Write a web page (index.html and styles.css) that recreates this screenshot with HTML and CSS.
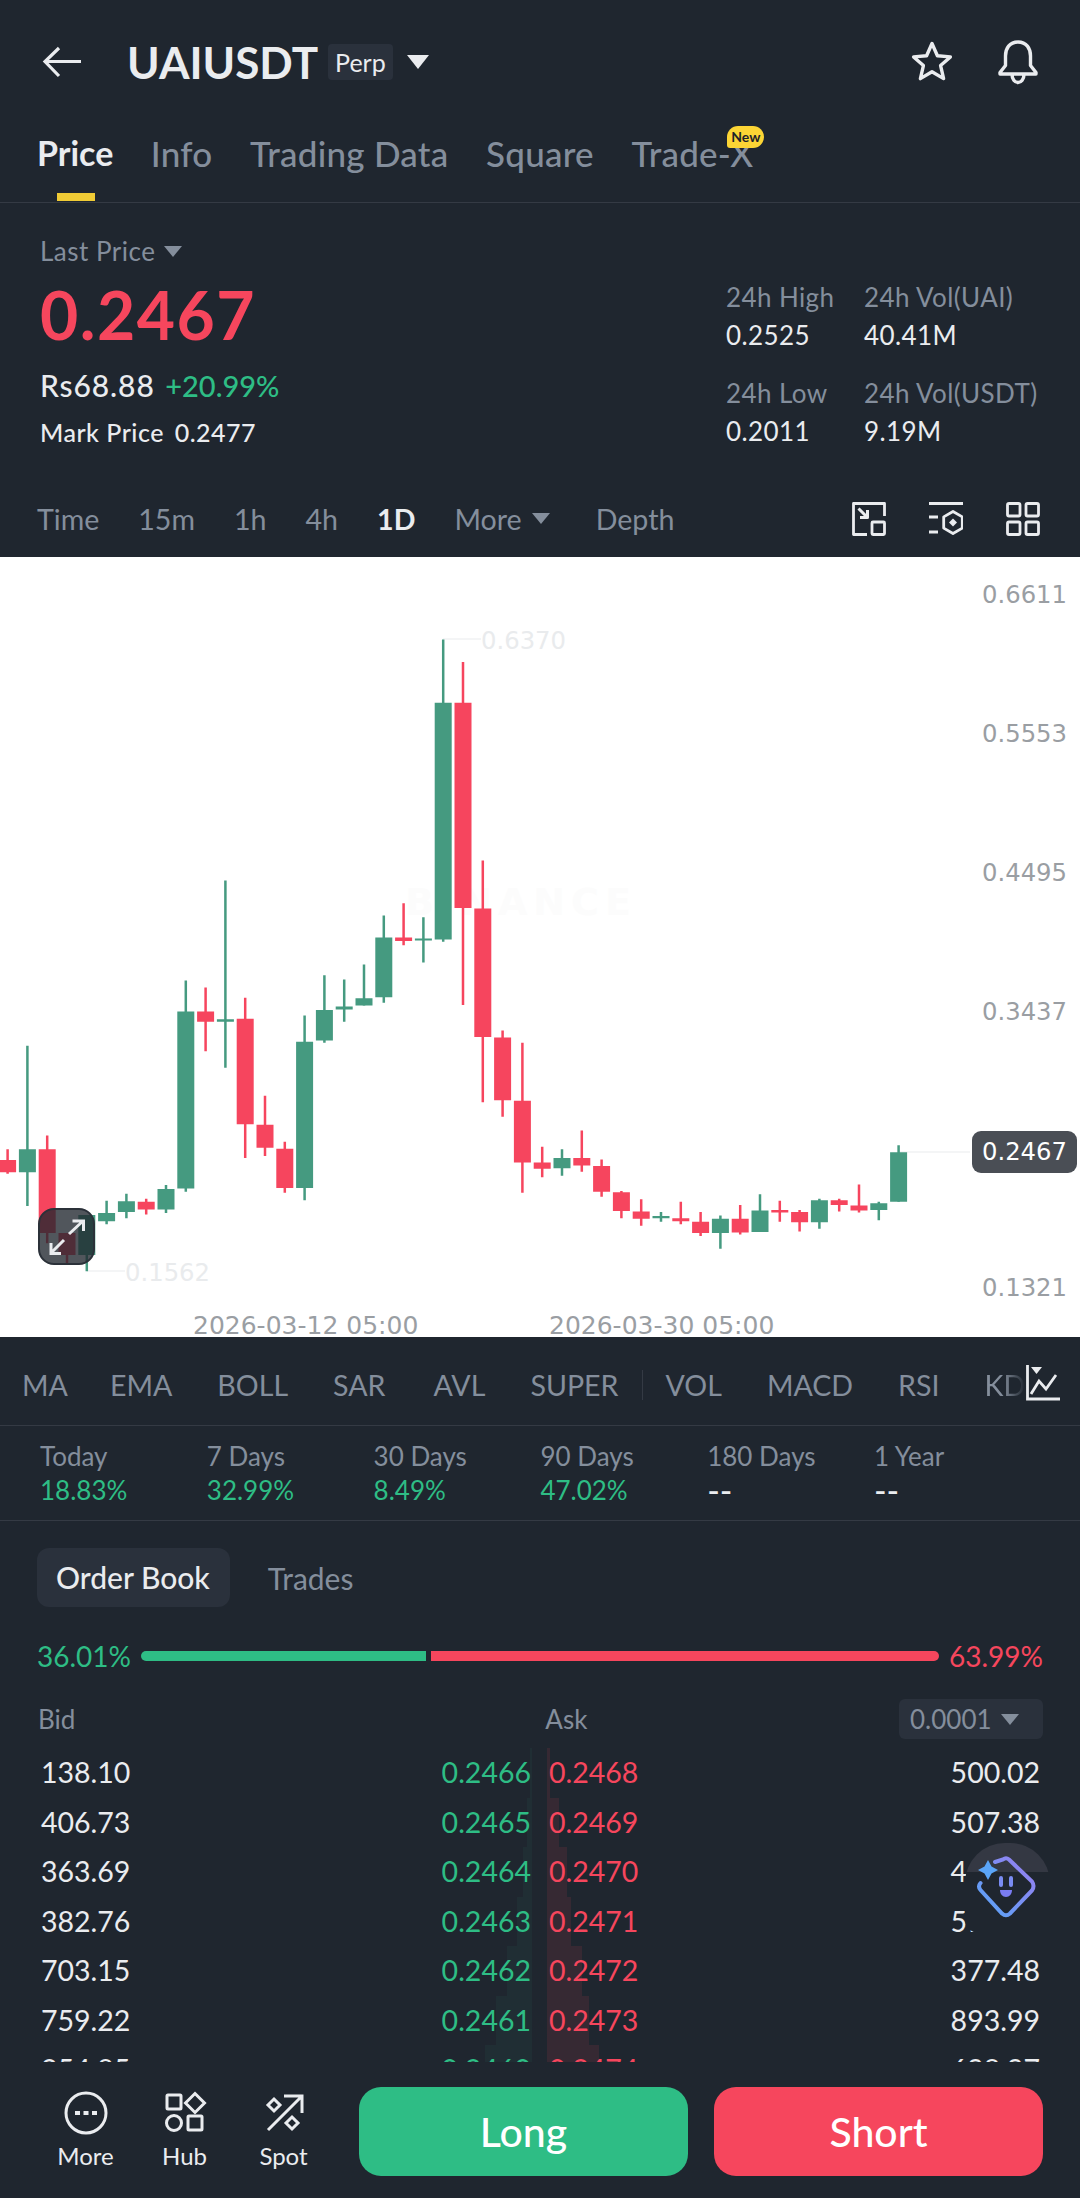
FILE: index.html
```html
<!DOCTYPE html>
<html lang="en">
<head>
<meta charset="utf-8">
<title>UAIUSDT Perp</title>
<link rel="stylesheet" href="styles.css">
</head>
<body>
<div class="page">
  <header class="header">
    <svg class="back" viewBox="0 0 40 32" width="40" height="32"><path d="M39 15.500H3M17 2 3 15.500 17 30"/></svg>
    <h1 class="symbol">UAIUSDT</h1>
    <span class="perp">Perp</span>
    <i class="caret caret-white"></i>
    <div class="header-icons">
      <svg class="ico-line" viewBox="0 0 44 44" width="44" height="44"><path d="M22 3.500l5.400 12.200 13 1.200-9.800 8.700 3 13-11.600-6.900-11.600 6.900 3-13-9.800-8.700 13-1.200z"/></svg>
      <svg class="ico-line" viewBox="0 0 44 46" width="44" height="46"><path d="M22 3C13.500 3 9.500 9.500 9.500 17v9.500L4 33.500v1.500h36v-1.500l-5.500-7V17C34.500 9.500 30.500 3 22 3zM16 35.500c0 4.500 2.800 8 6 8s6-3.500 6-8"/></svg>
    </div>
  </header>

  <nav class="tabs">
    <span class="tab active">Price</span>
    <span class="tab">Info</span>
    <span class="tab">Trading Data</span>
    <span class="tab">Square</span>
    <span class="tab">Trade-X<em class="new">New</em></span>
  </nav>

  <section class="ticker">
    <div class="ticker-main">
      <div class="last-label">Last Price <i class="caret caret-grey"></i></div>
      <div class="last-price">0.2467</div>
      <div class="fiat">Rs68.88 <span class="up">+20.99%</span></div>
      <div class="mark">Mark Price <span>0.2477</span></div>
    </div>
    <dl class="stats">
      <div><dt>24h High</dt><dd>0.2525</dd></div>
      <div><dt>24h Vol(UAI)</dt><dd>40.41M</dd></div>
      <div><dt>24h Low</dt><dd>0.2011</dd></div>
      <div><dt>24h Vol(USDT)</dt><dd>9.19M</dd></div>
    </dl>
  </section>

  <div class="timebar">
    <span>Time</span><span>15m</span><span>1h</span><span>4h</span><span class="on">1D</span>
    <span class="more">More<i class="caret caret-grey"></i></span>
    <span>Depth</span>
    <div class="time-icons">
      <svg class="ico-tool" viewBox="0 0 34 34" width="34" height="34"><path d="M15 32.500H1.500V1.500h31V14"/><rect x="20" y="20" width="12.500" height="12.500" rx="1"/><path d="M6.500 6.500l8.500 8.500M15.500 8v7.500H8" stroke-width="3"/></svg>
      <svg class="ico-tool" viewBox="0 0 34 34" width="34" height="34"><path d="M0 1.500h34M0 15h9M0 30h9M24 9.500l9.300 5.400v11.200L24 31.500l-9.300-5.400V14.900z"/><path class="fill" d="M24 16.500l4 4-4 4-4-4z"/></svg>
      <svg class="ico-tool" viewBox="0 0 34 34" width="34" height="34"><rect x="1.500" y="1.500" width="12.500" height="12.500" rx="1.500"/><rect x="20" y="1.500" width="12.500" height="12.500" rx="1.500"/><rect x="1.500" y="20" width="12.500" height="12.500" rx="1.500"/><rect x="20" y="20" width="12.500" height="12.500" rx="1.500"/></svg>
    </div>
  </div>

  <section class="chart">
    <svg class="plot" viewBox="0 0 1080 780" width="1080" height="780">
      <text class="watermark" x="405" y="345">BINANCE</text>
      <path class="guide" d="M443 82H481M87 714H125M899 595H970"/>
      <g transform="translate(0,3) scale(1,.5102)">
        <path class="wick green" d="M27.400 952V1266M86.800 1284V1394M106.600 1256V1302M126.400 1242V1290M166 1225V1280M185.800 824V1238M225.400 628V995M304.600 893V1255M324.400 814V946M344.200 822V905M364 793V873M383.800 697V868M423.400 700V789M443.200 156V748M562 1155V1207M661 1278V1297M720.400 1285V1350M760 1243V1317M819.400 1252V1311M878.800 1258V1294M898.600 1147V1258"/>
        <path class="body green" d="M27.400 1155V1200M86.800 1284V1362M106.600 1280V1296M126.400 1257V1278M166 1233V1273M185.800 885V1232M225.400 900V905M304.600 944V1231M324.400 882V942M344.200 875V881M364 859V873M383.800 740V857M423.400 742V746M443.200 280V744M562 1172V1192M661 1286V1290M720.400 1291V1319M760 1275V1317M819.400 1255V1298M878.800 1261V1274M898.600 1161V1258"/>
        <path class="wick red" d="M7.600 1155V1203M47.200 1128V1339M67 1319V1378M146.200 1252V1283M205.600 838V963M245.200 858V1172M265 1050V1168M284.800 1140V1240M403.600 673V755M463 200V872M482.800 589V1063M502.600 922V1091M522.400 946V1240M542.200 1150V1210M581.800 1118V1199M601.600 1175V1248M621.400 1237V1290M641.200 1253V1305M680.800 1258V1302M700.600 1278V1325M740.200 1264V1322M779.800 1256V1297M799.600 1274V1316M839.200 1252V1277M859 1224V1279"/>
        <path class="body red" d="M7.600 1176V1200M47.200 1155V1319M67 1319V1362M146.200 1258V1273M205.600 885V905M245.200 899V1106M265 1107V1152M284.800 1154V1231M403.600 740V747M463 280V682M482.800 683V935M502.600 936V1059M522.400 1060V1181M542.200 1181V1193M581.800 1172V1187M601.600 1188V1238M621.400 1239V1276M641.200 1277V1291M680.800 1290V1296M700.600 1297V1319M740.200 1291V1318M779.800 1274V1279M799.600 1278V1298M839.200 1255V1264M859 1265V1275"/>
      </g>
      <text class="mark-text" x="481" y="83">0.6370</text>
      <text class="mark-text" x="125" y="715">0.1562</text>
      <text class="axis" x="982" y="37">0.6611</text>
      <text class="axis" x="982" y="176">0.5553</text>
      <text class="axis" x="982" y="315">0.4495</text>
      <text class="axis" x="982" y="454">0.3437</text>
      <text class="axis" x="982" y="730">0.1321</text>
      <text class="axis stamp" x="193" y="768">2026-03-12 05:00</text>
      <text class="axis stamp" x="549" y="768">2026-03-30 05:00</text>
    </svg>
    <div class="price-tag">0.2467</div>
    <button class="expand" type="button" aria-label="Expand">
      <svg viewBox="0 0 56 56" width="56" height="56"><path d="M30 25 44 12M33.500 12H44.500V22M25 31 12 44M12 34V44.500H22"/></svg>
    </button>
  </section>

  <div class="indicators">
    <span class="ind-tight">MA</span><span>EMA</span><span>BOLL</span><span class="ind-loose">SAR</span><span>AVL</span><span>SUPER</span>
    <i class="sep"></i>
    <span>VOL</span><span>MACD</span><span>RSI</span><span class="kd">KDJ</span>
    <svg class="ind-icon" viewBox="0 0 34 36" width="34" height="36"><path d="M1.500 0V34H34M5 29l8-13 7 8 10-14"/><path class="fill" d="M5 2h11l-5.500 7z"/></svg>
  </div>

  <div class="periods">
    <div><b>Today</b><span class="up">18.83%</span></div>
    <div><b>7 Days</b><span class="up">32.99%</span></div>
    <div><b>30 Days</b><span class="up">8.49%</span></div>
    <div><b>90 Days</b><span class="up">47.02%</span></div>
    <div><b>180 Days</b><span class="nil">--</span></div>
    <div><b>1 Year</b><span class="nil">--</span></div>
  </div>

  <div class="book-tabs">
    <span class="pill">Order Book</span>
    <span class="plain">Trades</span>
  </div>

  <div class="ratio">
    <span class="up">36.01%</span>
    <div class="ratio-bar"><i class="bar-bid"></i><i class="bar-ask"></i></div>
    <span class="down">63.99%</span>
  </div>

  <div class="book-head">
    <span class="col-bid">Bid</span>
    <span class="col-ask">Ask</span>
    <span class="step">0.0001<i class="caret caret-grey"></i></span>
  </div>

  <div class="rows">
    <div class="row"><div class="side bid"><i class="depth" style="width:2px"></i><span class="qty">138.10</span><span class="up">0.2466</span></div><div class="side ask"><i class="depth" style="width:3px"></i><span class="down">0.2468</span><span class="qty">500.02</span></div></div>
    <div class="row"><div class="side bid"><i class="depth" style="width:5px"></i><span class="qty">406.73</span><span class="up">0.2465</span></div><div class="side ask"><i class="depth" style="width:12px"></i><span class="down">0.2469</span><span class="qty">507.38</span></div></div>
    <div class="row"><div class="side bid"><i class="depth" style="width:9px"></i><span class="qty">363.69</span><span class="up">0.2464</span></div><div class="side ask"><i class="depth" style="width:20px"></i><span class="down">0.2470</span><span class="qty">463.20</span></div></div>
    <div class="row"><div class="side bid"><i class="depth" style="width:15px"></i><span class="qty">382.76</span><span class="up">0.2463</span></div><div class="side ask"><i class="depth" style="width:24px"></i><span class="down">0.2471</span><span class="qty">512.39</span></div></div>
    <div class="row"><div class="side bid"><i class="depth" style="width:25px"></i><span class="qty">703.15</span><span class="up">0.2462</span></div><div class="side ask"><i class="depth" style="width:35px"></i><span class="down">0.2472</span><span class="qty">377.48</span></div></div>
    <div class="row"><div class="side bid"><i class="depth" style="width:36px"></i><span class="qty">759.22</span><span class="up">0.2461</span></div><div class="side ask"><i class="depth" style="width:42px"></i><span class="down">0.2473</span><span class="qty">893.99</span></div></div>
    <div class="row"><div class="side bid"><i class="depth" style="width:47px"></i><span class="qty">254.85</span><span class="up">0.2460</span></div><div class="side ask"><i class="depth" style="width:52px"></i><span class="down">0.2474</span><span class="qty">698.97</span></div></div>
  </div>

  <footer class="actions">
    <div class="nav">
      <div class="nav-item">
        <svg viewBox="0 0 44 44" width="44" height="44"><circle cx="22" cy="22" r="20"/><path class="dots" d="M11 22h5M19.500 22h5M28 22h5"/></svg>
        <span>More</span>
      </div>
      <div class="nav-item">
        <svg viewBox="0 0 44 44" width="44" height="44"><rect x="4" y="4" width="14" height="14" rx="1"/><path d="M32 2.500l9.500 9.500-9.500 9.500-9.500-9.500z"/><circle cx="11" cy="32" r="7.500"/><rect x="25" y="25" width="14" height="14" rx="1"/></svg>
        <span>Hub</span>
      </div>
      <div class="nav-item">
        <svg viewBox="0 0 44 44" width="44" height="44"><path d="M6 39 40 5M22 5H40V22M12 8l6 6-6 6-6-6zM30 26l6 6-6 6-6-6z"/></svg>
        <span>Spot</span>
      </div>
    </div>
    <button class="trade long" type="button">Long</button>
    <button class="trade short" type="button">Short</button>
  </footer>

  <div class="bot">
    <svg viewBox="0 0 87 87" width="87" height="87">
      <defs><linearGradient id="botg" x1="0" y1="1" x2="1" y2="0"><stop offset="0" stop-color="#56a6f7"/><stop offset="1" stop-color="#9a7cf0"/></linearGradient></defs>
      <path class="bot-line" stroke="url(#botg)" d="M32 19 40 16.500Q43 14 46 16.500L69 38.500Q72 43 69 47.500L47 70.500Q43 74 39 70.500L17.500 47Q14.500 43.500 17.500 40"/>
      <path fill="#5aa5f8" d="M25 17l3.500 6.500L35 27l-6.500 3.500L25 37l-3.500-6.500L15 27l6.500-3.500z"/>
      <path class="bot-face" d="M38 35v7M48 35v7"/>
      <path fill="#7a7cf2" d="M37 47h12c0 4-2.500 7-6 7s-6-3-6-7z"/>
    </svg>
  </div>
</div>
</body>
</html>
```

FILE: styles.css
```css
* { box-sizing: border-box; margin: 0; padding: 0; }
html, body { background: #1f262f; }
body { font-family: "Lato", "Liberation Sans", sans-serif; color: #eaecef; }
i, em { font-style: normal; display: inline-block; }

.page { position: relative; width: 1080px; height: 2198px; overflow: hidden; background: #1f262f; display: flex; flex-direction: column; }

.up { color: #2ebd85; }
.down { color: #f6465d; }

.caret { width: 0; height: 0; border-style: solid; border-color: transparent; border-bottom-width: 0; }
.caret-white { border-width: 14px 11px 0; border-top-color: #eaecef; }
.caret-grey { border-width: 11px 9px 0; border-top-color: #848e9c; }

/* header */
.header { height: 124px; flex: none; display: flex; align-items: center; padding: 0 40px 0 42px; }
.back { fill: none; stroke: #eaecef; stroke-width: 3.2; margin-right: 45px; }
.symbol { font-size: 44px; font-weight: 700; line-height: 50px; color: #eaecef; margin-right: 10px; }
.perp { height: 36px; line-height: 36px; padding: 0 7px; font-size: 25px; background: #2a313c; border-radius: 4px; margin-right: 14px; }
.header-icons { margin-left: auto; display: flex; gap: 42px; align-items: center; }
.ico-line { fill: none; stroke: #eaecef; stroke-width: 3.4; stroke-linejoin: round; }

/* tabs */
.tabs { height: 79px; flex: none; display: flex; gap: 37.500px; padding: 9px 0 0 37px; border-bottom: 1px solid #343a44; }
.tab { position: relative; height: 40px; line-height: 40px; font-size: 35px; letter-spacing: .25px; font-weight: 500; color: #848e9c; }
.tab.active { color: #eaecef; font-weight: 700; font-size: 34px; letter-spacing: 0; }
.tab.active::after { content: ""; position: absolute; left: 20px; top: 60px; width: 38px; height: 8px; background: #f0cb35; }
.new { position: absolute; left: 96px; top: -7px; width: 37px; height: 22px; border-radius: 11px 11px 11px 3px; background: #fcd535; color: #1e2329; font-size: 14px; line-height: 22px; letter-spacing: 0; text-align: center; font-weight: 700; }

/* ticker */
.ticker { height: 289px; flex: none; display: flex; justify-content: space-between; padding: 33px 0 0 40px; }
.last-label { font-size: 26px; letter-spacing: .5px; line-height: 30px; color: #848e9c; display: flex; align-items: center; gap: 8px; }
.last-price { font-size: 66px; font-weight: 700; letter-spacing: 1.500px; line-height: 70px; margin-top: 14px; color: #f6465d; }
.fiat { font-size: 30px; font-weight: 500; letter-spacing: .9px; line-height: 34px; margin-top: 18px; }
.fiat .up { font-size: 29px; letter-spacing: 0; margin-left: 2px; }
.mark { font-size: 25px; font-weight: 500; letter-spacing: .5px; line-height: 30px; margin-top: 14px; }
.mark span { margin-left: 4px; }
.stats { display: grid; grid-template-columns: 138px 216px; row-gap: 28px; padding-top: 46px; align-content: start; }
.stats dt { font-size: 26px; letter-spacing: .4px; line-height: 30px; color: #848e9c; }
.stats dd { font-size: 26px; letter-spacing: .4px; line-height: 30px; margin-top: 8px; }

/* time bar */
.timebar { height: 65px; flex: none; display: flex; align-items: center; gap: 39px; padding: 0 40px 12px 37px; font-size: 28.600px; color: #848e9c; }
.timebar .on { color: #eaecef; font-weight: 700; }
.more { display: flex; align-items: center; gap: 10px; margin-right: 7px; }
.time-icons { margin-left: auto; display: flex; gap: 43px; }
.ico-tool { fill: none; stroke: #eaecef; stroke-width: 2.800; stroke-linejoin: round; }
.ico-tool .fill { fill: #eaecef; stroke: none; }

/* chart */
.chart { position: relative; height: 780px; flex: none; background: #fff; overflow: hidden; }
.plot { display: block; }
.plot text { font-family: "DejaVu Sans", sans-serif; font-size: 24.300px; dominant-baseline: central; }
.axis { fill: #9a9ea3; }
.plot .stamp { font-size: 25px; }
.mark-text { fill: #e9ebed; }
.plot .watermark { fill: #fcfcfc; font-weight: 700; font-size: 38px; letter-spacing: 6px; }
.guide { fill: none; stroke: #e9ebed; stroke-width: 1; }
.wick, .body { fill: none; }
.wick { stroke-width: 2.500; }
.body { stroke-width: 17; }
.green { stroke: #459a80; }
.red { stroke: #f6455e; }
.price-tag { position: absolute; left: 972px; top: 574px; width: 105px; height: 42px; border-radius: 9px; background: #4a4e55; color: #fff; font-family: "DejaVu Sans", sans-serif; font-size: 24.300px; line-height: 42px; text-align: center; }
.expand { position: absolute; left: 38px; top: 651px; width: 57px; height: 57px; border: 2px solid #2b3139; border-radius: 16px; background: rgba(32, 38, 46, .78); display: flex; align-items: center; justify-content: center; }
.expand svg { flex: none; fill: none; stroke: #eaecef; stroke-width: 3; }

/* indicators */
.indicators { position: relative; height: 89px; flex: none; display: flex; align-items: center; gap: 45px; padding: 8px 0 0 22px; font-size: 28.600px; color: #848e9c; border-bottom: 1px solid #343a44; white-space: nowrap; overflow: hidden; }
.ind-tight { margin-right: -3px; }
.ind-loose { margin-right: 3px; }
.sep { width: 1px; height: 30px; background: #343a44; margin: 0 -22px; }
.kd { width: 40px; overflow: hidden; -webkit-mask-image: linear-gradient(90deg, #000 45%, transparent); mask-image: linear-gradient(90deg, #000 45%, transparent); }
.ind-icon { position: absolute; left: 1026px; top: 28px; fill: none; stroke: #eaecef; stroke-width: 2.800; }
.ind-icon .fill { fill: #eaecef; stroke: none; }

/* periods */
.periods { height: 95px; flex: none; display: grid; grid-template-columns: repeat(6, 166.800px); padding: 15px 0 0 40px; border-bottom: 1px solid #343a44; font-size: 26px; line-height: 30px; }
.periods b { display: block; font-weight: 400; color: #848e9c; }
.periods span { display: block; margin-top: 4px; }
.periods .nil { font-size: 34px; }

/* order book */
.book-tabs { flex: none; display: flex; align-items: center; gap: 38px; margin: 27px 0 0 37px; height: 59px; font-size: 30px; }
.pill { height: 59px; line-height: 59px; padding: 0 20px 0 19px; background: #2a313c; border-radius: 12px; font-weight: 500; }
.plain { color: #848e9c; }

.ratio { flex: none; height: 30px; margin-top: 34px; padding: 0 37px; display: flex; align-items: center; justify-content: space-between; font-size: 28px; line-height: 30px; }
.ratio-bar { width: 798px; height: 10px; display: flex; gap: 5px; }
.bar-bid { width: 285px; height: 10px; border-radius: 5px 0 0 5px; background: #2ebd85; }
.bar-ask { flex: 1; height: 10px; border-radius: 0 5px 5px 0; background: #f6465d; }

.book-head { position: relative; flex: none; height: 40px; margin-top: 28px; padding: 0 37px 0 38px; display: flex; align-items: center; font-size: 26px; color: #848e9c; }
.col-ask { margin-left: 470px; }
.step { margin-left: auto; width: 144px; height: 40px; padding-left: 11px; background: #2a313c; border-radius: 6px; display: flex; align-items: center; gap: 9px; }

.rows { flex: none; height: 314px; margin-top: 9px; overflow: hidden; }
.row { height: 49.500px; display: grid; grid-template-columns: 540px 540px; font-size: 28.500px; line-height: 49.500px; }
.side { position: relative; display: flex; justify-content: space-between; }
.bid { padding: 0 9px 0 41px; }
.ask { padding: 0 40px 0 9px; }
.side span { position: relative; }
.qty { color: #eaecef; }
.depth { position: absolute; top: 0; bottom: 0; }
.bid .depth { right: 8px; background: rgba(46, 189, 133, .06); }
.ask .depth { left: 7px; background: rgba(246, 70, 93, .11); }

/* actions */
.actions { flex: none; height: 137px; padding: 25px 37px 0 36px; display: flex; gap: 26px; background: #1f262f; }
.nav { display: flex; width: 297px; }
.nav-item { width: 99px; padding-top: 4px; display: flex; flex-direction: column; align-items: center; font-size: 24px; line-height: 30px; gap: 6px; }
.nav-item svg { fill: none; stroke: #eaecef; stroke-width: 3; }
.nav-item .dots { stroke-width: 4; }
.trade { width: 329px; height: 89px; border: 0; border-radius: 22px; font-family: inherit; font-size: 41px; font-weight: 500; color: #fff; }
.long { background: #2ebd85; }
.short { background: #f6465d; }

/* assistant bubble */
.bot { position: absolute; left: 965px; top: 1843px; width: 85px; height: 90px; border-radius: 40px 40px 14px 14px; background: linear-gradient(#343843 0 29px, #1f262f 29px); }
.bot svg { display: block; margin-left: -2px; }
.bot-line { fill: none; stroke-width: 4; stroke-linecap: round; }
.bot-face { fill: none; stroke: #7a8cf2; stroke-width: 4; stroke-linecap: round; }
```
